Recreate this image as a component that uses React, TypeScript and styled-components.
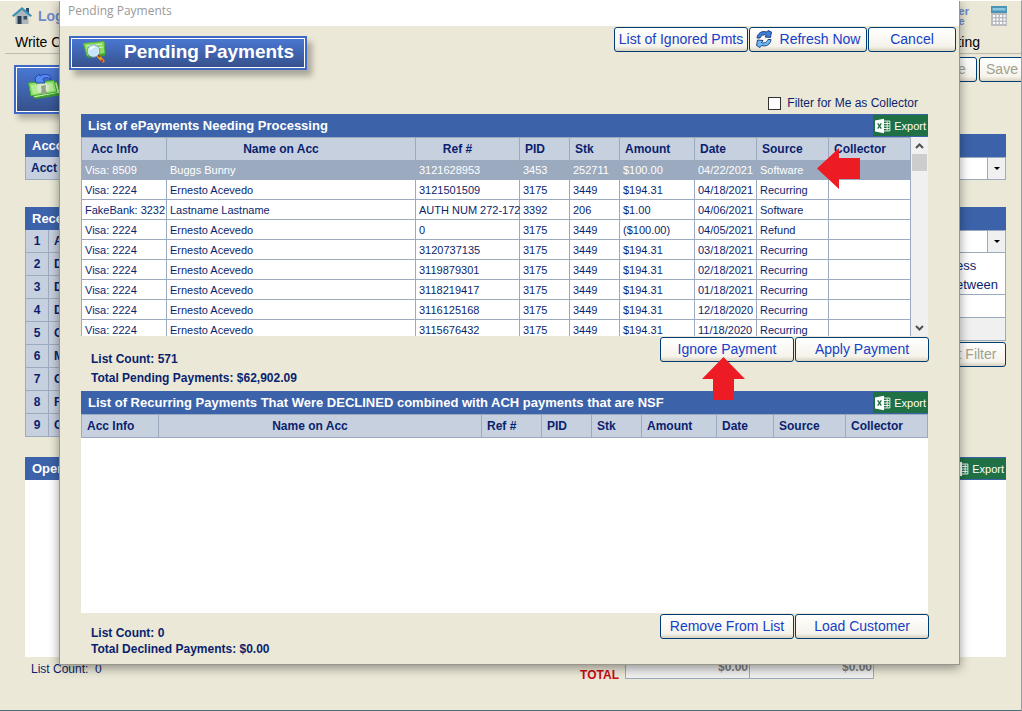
import React from "react";
import styled, { createGlobalStyle, css } from "styled-components";

const sans = '"Liberation Sans", Arial, sans-serif';
const c = {
  sand: "#ebe8d7",
  navy: "#0a1f6e",
  bar: "#3c62a9",
  head: "#c7d0df",
  line: "#9baabf",
  green: "#1f7145",
  red: "#ed1c24",
};

const GlobalStyle = createGlobalStyle`
  *, *::before, *::after { box-sizing: border-box; }
  body { margin: 0; background: ${c.sand}; font-family: ${sans}; }
  button, input, select { font-family: inherit; }
`;

/* ---------- shared parts ---------- */

const PushButton = styled.button<{ $width?: number }>`
  display: flex;
  align-items: center;
  justify-content: center;
  gap: 8px;
  width: ${(p) => (p.$width ? `${p.$width}px` : "auto")};
  height: 25px;
  flex: none;
  padding: 0 0 2px;
  border: 1px solid #003c74;
  border-radius: 3px;
  background: linear-gradient(#ffffff, #f5f3ea 80%, #d9d2c0);
  color: #1640c8;
  font-size: 14px;
  line-height: 18px;
  white-space: nowrap;
  &:disabled { color: #a3a08f; }
`;

const TitleBar = styled.div`
  display: flex;
  align-items: center;
  justify-content: space-between;
  height: 23px;
  padding-left: 7px;
  background: ${c.bar};
`;

const TitleText = styled.h2`
  margin: 0;
  color: #fff;
  font-size: 13px;
  line-height: 16px;
  font-weight: bold;
  white-space: nowrap;
`;

const ExportButton = styled.button`
  display: flex;
  align-items: center;
  gap: 3px;
  height: 21px;
  width: 55px;
  padding: 0 2px;
  border: 0;
  background: ${c.green};
  color: #fff;
  font-size: 11px;
  line-height: 14px;
`;

const ExcelIcon = () => (
  <svg width="18" height="16" viewBox="0 0 18 16" aria-hidden="true">
    <path d="M0 2 10 0v16L0 14z" fill="#fff" />
    <path d="M3 5l4 6M7 5l-4 6" stroke={c.green} strokeWidth="1.5" />
    <path d="M10 2.5h6.5v11H10M10 5.2h6M10 8h6M10 10.8h6M13.5 3v10" stroke="#fff" fill="none" strokeWidth="1" />
  </svg>
);

const Export = () => (
  <ExportButton type="button">
    <ExcelIcon />
    Export
  </ExportButton>
);

/* ---------- main window behind the dialog ---------- */

const Page = styled.main`
  position: relative;
  display: flex;
  flex-direction: column;
  min-height: 100vh;
  overflow: hidden;
  border-top: 1px solid #fff;
  border-right: 1px solid #98a0a4;
  border-bottom: 1px solid #46707f;
  background: ${c.sand};
`;

const TopBar = styled.header`
  display: flex;
  align-items: center;
  justify-content: space-between;
  height: 30px;
  padding: 0 14px 0 12px;
`;

const TopLink = styled.a`
  display: flex;
  align-items: center;
  gap: 6px;
  color: #6f8ac8;
  font-size: 14px;
  font-weight: bold;
  text-decoration: none;
`;

const TopRight = styled.div`
  display: flex;
  align-items: center;
  gap: 22px;
`;

const SmallLink = styled.a`
  color: #6f8ac8;
  font-size: 11px;
  line-height: 10px;
  font-weight: bold;
  text-decoration: none;
  span { display: block; }
`;

const MenuBar = styled.nav`
  display: flex;
  align-items: center;
  justify-content: space-between;
  height: 23px;
  margin-left: 5px;
  padding: 0 41px 0 10px;
  border-bottom: 1px solid #bdbab0;
  color: #000;
  font-size: 14px;
`;

const ToolRow = styled.div`
  display: flex;
  justify-content: space-between;
  align-items: flex-start;
  height: 80px;
  padding-left: 14px;
`;

const ToolTile = styled.div`
  display: flex;
  align-items: center;
  width: 90px;
  height: 49px;
  margin-top: 11px;
  padding: 0 0 6px 12px;
  border: 2px solid #3d68c4;
  background: linear-gradient(#4a78d4, #35508a);
  box-shadow: inset 0 0 0 1px #fff, 4px 5px 6px rgba(0, 0, 0, 0.25);
`;

const ToolButtons = styled.div`
  display: flex;
  gap: 2px;
  margin: 3px -4px 0 0;
`;

const Body = styled.div`
  padding: 0 15px 0 25px;
`;

const Section = styled.section<{ $gap: number }>`
  margin-bottom: ${(p) => p.$gap}px;
`;

const Split = styled.div<{ $height: number }>`
  display: flex;
  justify-content: space-between;
  align-items: flex-start;
  height: ${(p) => p.$height}px;
`;

const SideTable = styled.table`
  width: 80px;
  table-layout: fixed;
  border-collapse: separate;
  border-spacing: 0;
  border-left: 1px solid ${c.line};
  th {
    height: 23px;
    padding: 0 5px;
    border: 0 solid ${c.line};
    border-width: 0 1px 1px 0;
    background: ${c.head};
    color: ${c.navy};
    font-size: 12px;
    line-height: 14px;
    text-align: left;
  }
`;

const NumberCell = styled.th`
  width: 23px;
  && { text-align: center; }
`;

const SideColumn = styled.div`
  width: 80px;
  color: ${c.navy};
  font-size: 13px;
`;

const Combo = styled.label`
  display: flex;
  height: 23px;
  border: 1px solid ${c.line};
  background: #fff;
  select {
    flex: 1;
    min-width: 0;
    border: 0;
    background: transparent;
    appearance: none;
  }
  span {
    display: flex;
    align-items: center;
    justify-content: center;
    width: 18px;
    border-left: 1px solid ${c.line};
    background: #f0f0f0;
  }
`;

const Choices = styled.div`
  height: 42px;
  padding: 3px 0 0 29px;
  border: solid ${c.line};
  border-width: 0 1px 1px;
  background: #fff;
  line-height: 19px;
`;

const Blank = styled.div<{ $grey?: boolean }>`
  height: 23px;
  border: solid ${c.line};
  border-width: 0 1px 1px;
  background: ${(p) => (p.$grey ? "#f0f0f0" : "#fff")};
`;

const FilterSlot = styled.div`
  display: flex;
  justify-content: flex-end;
  padding-top: 1px;
`;

const OpenArea = styled.div`
  height: 177px;
  background: #fff;
`;

const Bottom = styled.footer`
  display: flex;
  height: 22px;
  padding: 0 147px 0 31px;
  color: ${c.navy};
  font-size: 12px;
  line-height: 24px;
`;

const TotalLabel = styled.strong`
  margin-left: auto;
  padding: 6px 6px 0 0;
  color: #c80a14;
  line-height: 24px;
`;

const TotalCell = styled.span<{ $first?: boolean }>`
  width: ${(p) => (p.$first ? 125 : 124)}px;
  height: 22px;
  padding-right: 1px;
  border: solid ${c.line};
  border-width: 0 1px 1px ${(p) => (p.$first ? 1 : 0)}px;
  background: #f0f0f0;
  color: #808080;
  font-weight: bold;
  line-height: 20px;
  text-align: right;
`;

const Caret = () => (
  <svg width="6" height="3" viewBox="0 0 6 3" aria-hidden="true">
    <path d="M0 0h6L3 3z" fill="#000" />
  </svg>
);

const HomeIcon = () => (
  <svg width="20" height="18" viewBox="0 0 20 18" aria-hidden="true">
    <path d="M3.5 8 10 2.500 16.500 8v9h-13z" fill="#aeb6bb" />
    <path d="M14 1h3v6l-3-2.500z" fill="#2f4c66" />
    <path d="M0 8.500 10 0l10 8.500-1.500 1.500L10 3 1.500 10z" fill="#3c91b3" />
    <path d="M5.500 9h4v8h-4z" fill="#2b3e54" />
    <path d="M11.500 9h3.500v3.500h-3.500z" fill="#35506b" />
  </svg>
);

const CalculatorIcon = () => (
  <svg width="16" height="20" viewBox="0 0 16 20" aria-hidden="true">
    <path d="M0 0h16v20H0z" fill="#b9bcc0" />
    <path d="M0 0h16v7H0z" fill="#4c93b5" />
    <path d="M1.500 2h13v2.500h-13z" fill="#8cc8e0" />
    <path d="M2 9h2v2H2zM5.500 9h2v2h-2zM9 9h2v2H9zM12.500 9h2v2h-2zM2 12.500h2v2H2zM5.500 12.500h2v2h-2zM9 12.500h2v2H9zM12.500 12.500h2v2h-2zM2 16h2v2H2zM5.500 16h2v2h-2zM9 16h2v2H9zM12.500 16h2v2h-2z" fill="#fff" />
  </svg>
);

const MoneyReturnIcon = () => (
  <svg width="34" height="26" viewBox="0 0 34 26" aria-hidden="true">
    <path d="M6 12 31 10l3 11-26 4z" fill="#3c9a2c" />
    <path d="M3 10 29 8l3 11-26 5z" fill="#c9f2ad" stroke="#3a9a2c" />
    <path d="M.5 9 26 6.500 29 18 3 22z" fill="#8fe068" stroke="#42a832" />
    <path d="M3 11 24 9l2.500 7.500L5 20z" fill="#b4ec96" />
    <ellipse cx="15" cy="14" rx="6" ry="5.500" fill="#d9e8c8" />
    <path d="M11 20c3-1 3-4 2-8l5-1c-1 4 0 7 2 8z" fill="#93a587" />
    <path d="M7 4 11 0l1 2c5-3 11-2 11 4-3-3-6-3-8-1l2 4-9 0z" fill="#5588f0" stroke="#1f3fae" strokeWidth=".9" />
  </svg>
);

/* ---------- dialog ---------- */

const Dialog = styled.section`
  position: absolute;
  top: -1px;
  left: 59px;
  right: 61px;
  border: solid #99968c;
  border-width: 0 1px 1px;
  background: ${c.sand};
  box-shadow: 0 3px 10px rgba(0, 0, 0, 0.4);
`;

const Caption = styled.div`
  height: 26px;
  padding: 2px 8px;
  background: #fff;
  color: #999;
  font-family: "Open Sans", "Noto Sans", sans-serif;
  font-size: 12px;
  line-height: 18px;
`;

const DialogTop = styled.div`
  display: flex;
  justify-content: space-between;
  align-items: flex-start;
  height: 66px;
  padding: 1px 3px 0 9px;
`;

const Heading = styled.h1`
  display: flex;
  align-items: center;
  gap: 17px;
  width: 238px;
  height: 34px;
  margin: 9px 0 0;
  padding: 0 0 2px 12px;
  border: 2px solid #3d68c4;
  background: linear-gradient(#4a78d4, #35508a);
  box-shadow: inset 0 0 0 1px #fff, 5px 6px 6px rgba(0, 0, 0, 0.28);
  color: #fff;
  font-size: 19px;
  line-height: 24px;
  white-space: nowrap;
`;

const TopButtons = styled.div`
  display: flex;
  gap: 1px;
`;

const Inner = styled.div`
  padding: 0 31px 14px 21px;
`;

const FilterRow = styled.label`
  display: flex;
  justify-content: flex-end;
  align-items: center;
  gap: 6px;
  height: 22px;
  padding-right: 10px;
  color: ${c.navy};
  font-size: 12px;
`;

const CheckBox = styled.input`
  appearance: none;
  width: 13px;
  height: 13px;
  margin: 0;
  border: 1px solid #333;
  background: #fff;
`;

const Grid = styled.div<{ $height: number }>`
  display: flex;
  align-items: flex-start;
  height: ${(p) => p.$height}px;
  overflow: hidden;
  background: #fff;
`;

const GridTable = styled.table`
  flex: 1;
  width: 100%;
  min-width: 0;
  table-layout: fixed;
  border-collapse: separate;
  border-spacing: 0;
  border-left: 1px solid ${c.line};
  color: ${c.navy};
  white-space: nowrap;
`;

const Th = styled.th<{ $width?: number; $mode?: "first" | "center" }>`
  width: ${(p) => (p.$width ? `${p.$width}px` : "auto")};
  height: 23px;
  padding: 0 0 0 5px;
  border: solid ${c.line};
  border-width: 1px 1px 0 0;
  background: ${c.head};
  font-size: 12px;
  line-height: 14px;
  text-align: left;
  ${(p) => p.$mode === "first" && css`padding-left: 9px;`}
  ${(p) => p.$mode === "center" && css`padding: 0 20px 0 0; text-align: center;`}
`;

const HeadRow = styled.tr<{ $closed?: boolean }>`
  ${(p) => p.$closed && css`
    ${Th} { height: 24px; border-bottom-width: 1px; }
  `}
`;

const Row = styled.tr<{ $selected: boolean }>`
  td {
    height: 20px;
    padding: 0 3px;
    border: solid ${c.line};
    border-width: 0 1px 1px 0;
    font-size: 11px;
    line-height: 14px;
    ${(p) => p.$selected && css`background: ${c.line}; color: #fff;`}
  }
`;

const ScrollBar = styled.div`
  display: flex;
  flex-direction: column;
  align-self: stretch;
  width: 17px;
  background: #f0f0f0;
`;

const ScrollArrow = styled.button`
  display: flex;
  align-items: center;
  justify-content: center;
  height: 17px;
  padding: 0;
  border: 0;
  background: transparent;
`;

const ScrollTrack = styled.div`
  flex: 1;
  padding: 0 1px;
`;

const ScrollThumb = styled.div`
  height: 17px;
  background: #cdcdcd;
`;

const Summary = styled.div<{ $height: number }>`
  position: relative;
  display: flex;
  justify-content: space-between;
  height: ${(p) => p.$height}px;
  margin-right: -1px;
  padding: 1px 0 0 10px;
`;

const Totals = styled.div<{ $line: number }>`
  padding-top: ${(p) => (p.$line > 16 ? 13 : 11)}px;
  color: ${c.navy};
  font-size: 12px;
  font-weight: bold;
  line-height: ${(p) => p.$line}px;
  p { margin: 0; }
`;

const Actions = styled.div`
  display: flex;
  gap: 1px;
`;

const ArrowLeft = styled.svg`
  position: absolute;
  top: 148px;
  right: 99px;
`;

const ArrowUp = styled.svg`
  position: absolute;
  top: 21px;
  right: 184px;
`;

const SearchMoneyIcon = () => (
  <svg width="24" height="22" viewBox="0 0 24 22" aria-hidden="true">
    <path d="M3 4 21 2l1 13-17 2z" fill="#3f9c30" />
    <path d="M.5 2.500 21 .5l1 12L4 15z" fill="#8fdc5e" stroke="#4fb53c" />
    <path d="M3 5l16-2M4 8l16-2" stroke="#d5f7bc" />
    <path d="M14 14l6 6" stroke="#f0a020" strokeWidth="3" strokeLinecap="round" />
    <path d="M15 14l2 2M18 19l2 1.500" stroke="#c3340c" strokeWidth="2" />
    <circle cx="10.500" cy="10" r="5.500" fill="#c4e4fb" stroke="#eef6fd" strokeWidth="1" />
    <circle cx="10.500" cy="10" r="6.200" fill="none" stroke="#5f94cc" strokeWidth=".8" />
    <path d="M7.500 9c.5-2 2-3 4-2.500" stroke="#fff" strokeWidth="1.500" fill="none" />
  </svg>
);

const RefreshIcon = () => (
  <svg width="16" height="18" viewBox="0 0 16 18" aria-hidden="true">
    <path d="M1 8C1.500 3 6 .5 10.500 2L12 .5 15.500 2 14.500 7.500 9 7l1.500-1.800C7.500 4.200 5 5.200 4 8z" fill="#3f7fd6" stroke="#17357c" strokeWidth=".9" />
    <path d="M15 9.500c-.5 5-5 7.500-9.500 6L4 17.500.5 15.500 1.500 10 7 10.500 5.500 12.500c3 1 5.500-.2 6.500-3z" fill="#6fb8f6" stroke="#17357c" strokeWidth=".9" />
  </svg>
);

const Chevron = ({ up }: { up?: boolean }) => (
  <svg width="9" height="6" viewBox="0 0 9 6" aria-hidden="true">
    <path d={up ? "M1 5l3.500-3.500L8 5" : "M1 1l3.500 3.500L8 1"} fill="none" stroke="#505050" strokeWidth="2" />
  </svg>
);

const rows = [
  ["Visa: 8509", "Buggs Bunny", "3121628953", "3453", "252711", "$100.00", "04/22/2021", "Software", ""],
  ["Visa: 2224", "Ernesto Acevedo", "3121501509", "3175", "3449", "$194.31", "04/18/2021", "Recurring", ""],
  ["FakeBank: 3232", "Lastname Lastname", "AUTH NUM 272-172", "3392", "206", "$1.00", "04/06/2021", "Software", ""],
  ["Visa: 2224", "Ernesto Acevedo", "0", "3175", "3449", "($100.00)", "04/05/2021", "Refund", ""],
  ["Visa: 2224", "Ernesto Acevedo", "3120737135", "3175", "3449", "$194.31", "03/18/2021", "Recurring", ""],
  ["Visa: 2224", "Ernesto Acevedo", "3119879301", "3175", "3449", "$194.31", "02/18/2021", "Recurring", ""],
  ["Visa: 2224", "Ernesto Acevedo", "3118219417", "3175", "3449", "$194.31", "01/18/2021", "Recurring", ""],
  ["Visa: 2224", "Ernesto Acevedo", "3116125168", "3175", "3449", "$194.31", "12/18/2020", "Recurring", ""],
  ["Visa: 2224", "Ernesto Acevedo", "3115676432", "3175", "3449", "$194.31", "11/18/2020", "Recurring", ""],
];

const sideLetters = ["A", "D", "D", "D", "C", "M", "C", "F", "C"];

const PendingDialog = () => (
  <Dialog role="dialog" aria-labelledby="pending-heading">
    <Caption>Pending Payments</Caption>
    <DialogTop>
      <Heading id="pending-heading">
        <SearchMoneyIcon />
        Pending Payments
      </Heading>
      <TopButtons>
        <PushButton $width={134}>List of Ignored Pmts</PushButton>
        <PushButton $width={118}>
          <RefreshIcon />
          Refresh Now
        </PushButton>
        <PushButton $width={88}>Cancel</PushButton>
      </TopButtons>
    </DialogTop>
    <Inner>
      <FilterRow>
        <CheckBox type="checkbox" />
        Filter for Me as Collector
      </FilterRow>
      <TitleBar>
        <TitleText>List of ePayments Needing Processing</TitleText>
        <Export />
      </TitleBar>
      <Grid $height={199}>
        <GridTable>
          <thead>
            <HeadRow>
              <Th $width={85} $mode="first">Acc Info</Th>
              <Th $mode="center">Name on Acc</Th>
              <Th $width={104} $mode="center">Ref #</Th>
              <Th $width={50}>PID</Th>
              <Th $width={50}>Stk</Th>
              <Th $width={75}>Amount</Th>
              <Th $width={62}>Date</Th>
              <Th $width={72}>Source</Th>
              <Th $width={82}>Collector</Th>
            </HeadRow>
          </thead>
          <tbody>
            {rows.map((row, i) => (
              <Row key={i} $selected={i === 0}>
                {row.map((cell, j) => (
                  <td key={j}>{cell}</td>
                ))}
              </Row>
            ))}
          </tbody>
        </GridTable>
        <ScrollBar>
          <ScrollArrow type="button" aria-label="Scroll up"><Chevron up /></ScrollArrow>
          <ScrollTrack><ScrollThumb /></ScrollTrack>
          <ScrollArrow type="button" aria-label="Scroll down"><Chevron /></ScrollArrow>
        </ScrollBar>
      </Grid>
      <Summary $height={55}>
        <Totals $line={19}>
          <p>List Count: 571</p>
          <p>Total Pending Payments: $62,902.09</p>
        </Totals>
        <Actions>
          <PushButton $width={134}>Ignore Payment</PushButton>
          <PushButton $width={134}>Apply Payment</PushButton>
        </Actions>
        <ArrowUp width="43" height="43" viewBox="0 0 43 43" aria-hidden="true">
          <path d="M21.500 0 43 22H32v21H11V22H0z" fill={c.red} />
        </ArrowUp>
      </Summary>
      <TitleBar>
        <TitleText>List of Recurring Payments That Were DECLINED combined with ACH payments that are NSF</TitleText>
        <Export />
      </TitleBar>
      <Grid $height={199}>
        <GridTable>
          <thead>
            <HeadRow $closed>
              <Th $width={77}>Acc Info</Th>
              <Th $mode="center">Name on Acc</Th>
              <Th $width={60}>Ref #</Th>
              <Th $width={50}>PID</Th>
              <Th $width={50}>Stk</Th>
              <Th $width={75}>Amount</Th>
              <Th $width={57}>Date</Th>
              <Th $width={72}>Source</Th>
              <Th $width={82}>Collector</Th>
            </HeadRow>
          </thead>
        </GridTable>
      </Grid>
      <Summary $height={37}>
        <Totals $line={16}>
          <p>List Count: 0</p>
          <p>Total Declined Payments: $0.00</p>
        </Totals>
        <Actions>
          <PushButton $width={134}>Remove From List</PushButton>
          <PushButton $width={134}>Load Customer</PushButton>
        </Actions>
      </Summary>
    </Inner>
    <ArrowLeft width="43" height="41" viewBox="0 0 43 41" aria-hidden="true">
      <path d="M0 20.500 22 0v10h21v21H22v10z" fill={c.red} />
    </ArrowLeft>
  </Dialog>
);

export default function App() {
  return (
    <>
      <GlobalStyle />
      <Page>
        <TopBar>
          <TopLink href="#"><HomeIcon />Log</TopLink>
          <TopRight>
            <SmallLink href="#"><span>er</span><span>e</span></SmallLink>
            <CalculatorIcon />
          </TopRight>
        </TopBar>
        <MenuBar>
          <span>Write C</span>
          <span>ting</span>
        </MenuBar>
        <ToolRow>
          <ToolTile><MoneyReturnIcon /></ToolTile>
          <ToolButtons>
            <PushButton $width={30} disabled>e</PushButton>
            <PushButton $width={46} disabled>Save</PushButton>
          </ToolButtons>
        </ToolRow>
        <Body>
          <Section $gap={27}>
            <TitleBar><TitleText>Acco</TitleText></TitleBar>
            <Split $height={23}>
              <SideTable>
                <tbody><tr><th>Acct</th></tr></tbody>
              </SideTable>
              <SideColumn>
                <Combo><select aria-label="Account" /><span><Caret /></span></Combo>
              </SideColumn>
            </Split>
          </Section>
          <Section $gap={20}>
            <TitleBar><TitleText>Rece</TitleText></TitleBar>
            <Split $height={207}>
              <SideTable>
                <tbody>
                  {sideLetters.map((letter, i) => (
                    <tr key={i}>
                      <NumberCell>{i + 1}</NumberCell>
                      <th>{letter}</th>
                    </tr>
                  ))}
                </tbody>
              </SideTable>
              <SideColumn>
                <Combo><select aria-label="Receipt" /><span><Caret /></span></Combo>
                <Choices>
                  <div>ess</div>
                  <div>etween</div>
                </Choices>
                <Blank />
                <Blank $grey />
                <FilterSlot><PushButton $width={58} disabled>t Filter</PushButton></FilterSlot>
              </SideColumn>
            </Split>
          </Section>
          <Section $gap={0}>
            <TitleBar><TitleText>Open</TitleText><Export /></TitleBar>
            <OpenArea />
          </Section>
        </Body>
        <Bottom>
          <span>List Count:&nbsp; 0</span>
          <TotalLabel>TOTAL</TotalLabel>
          <TotalCell $first>$0.00</TotalCell>
          <TotalCell>$0.00</TotalCell>
        </Bottom>
        <PendingDialog />
      </Page>
    </>
  );
}
